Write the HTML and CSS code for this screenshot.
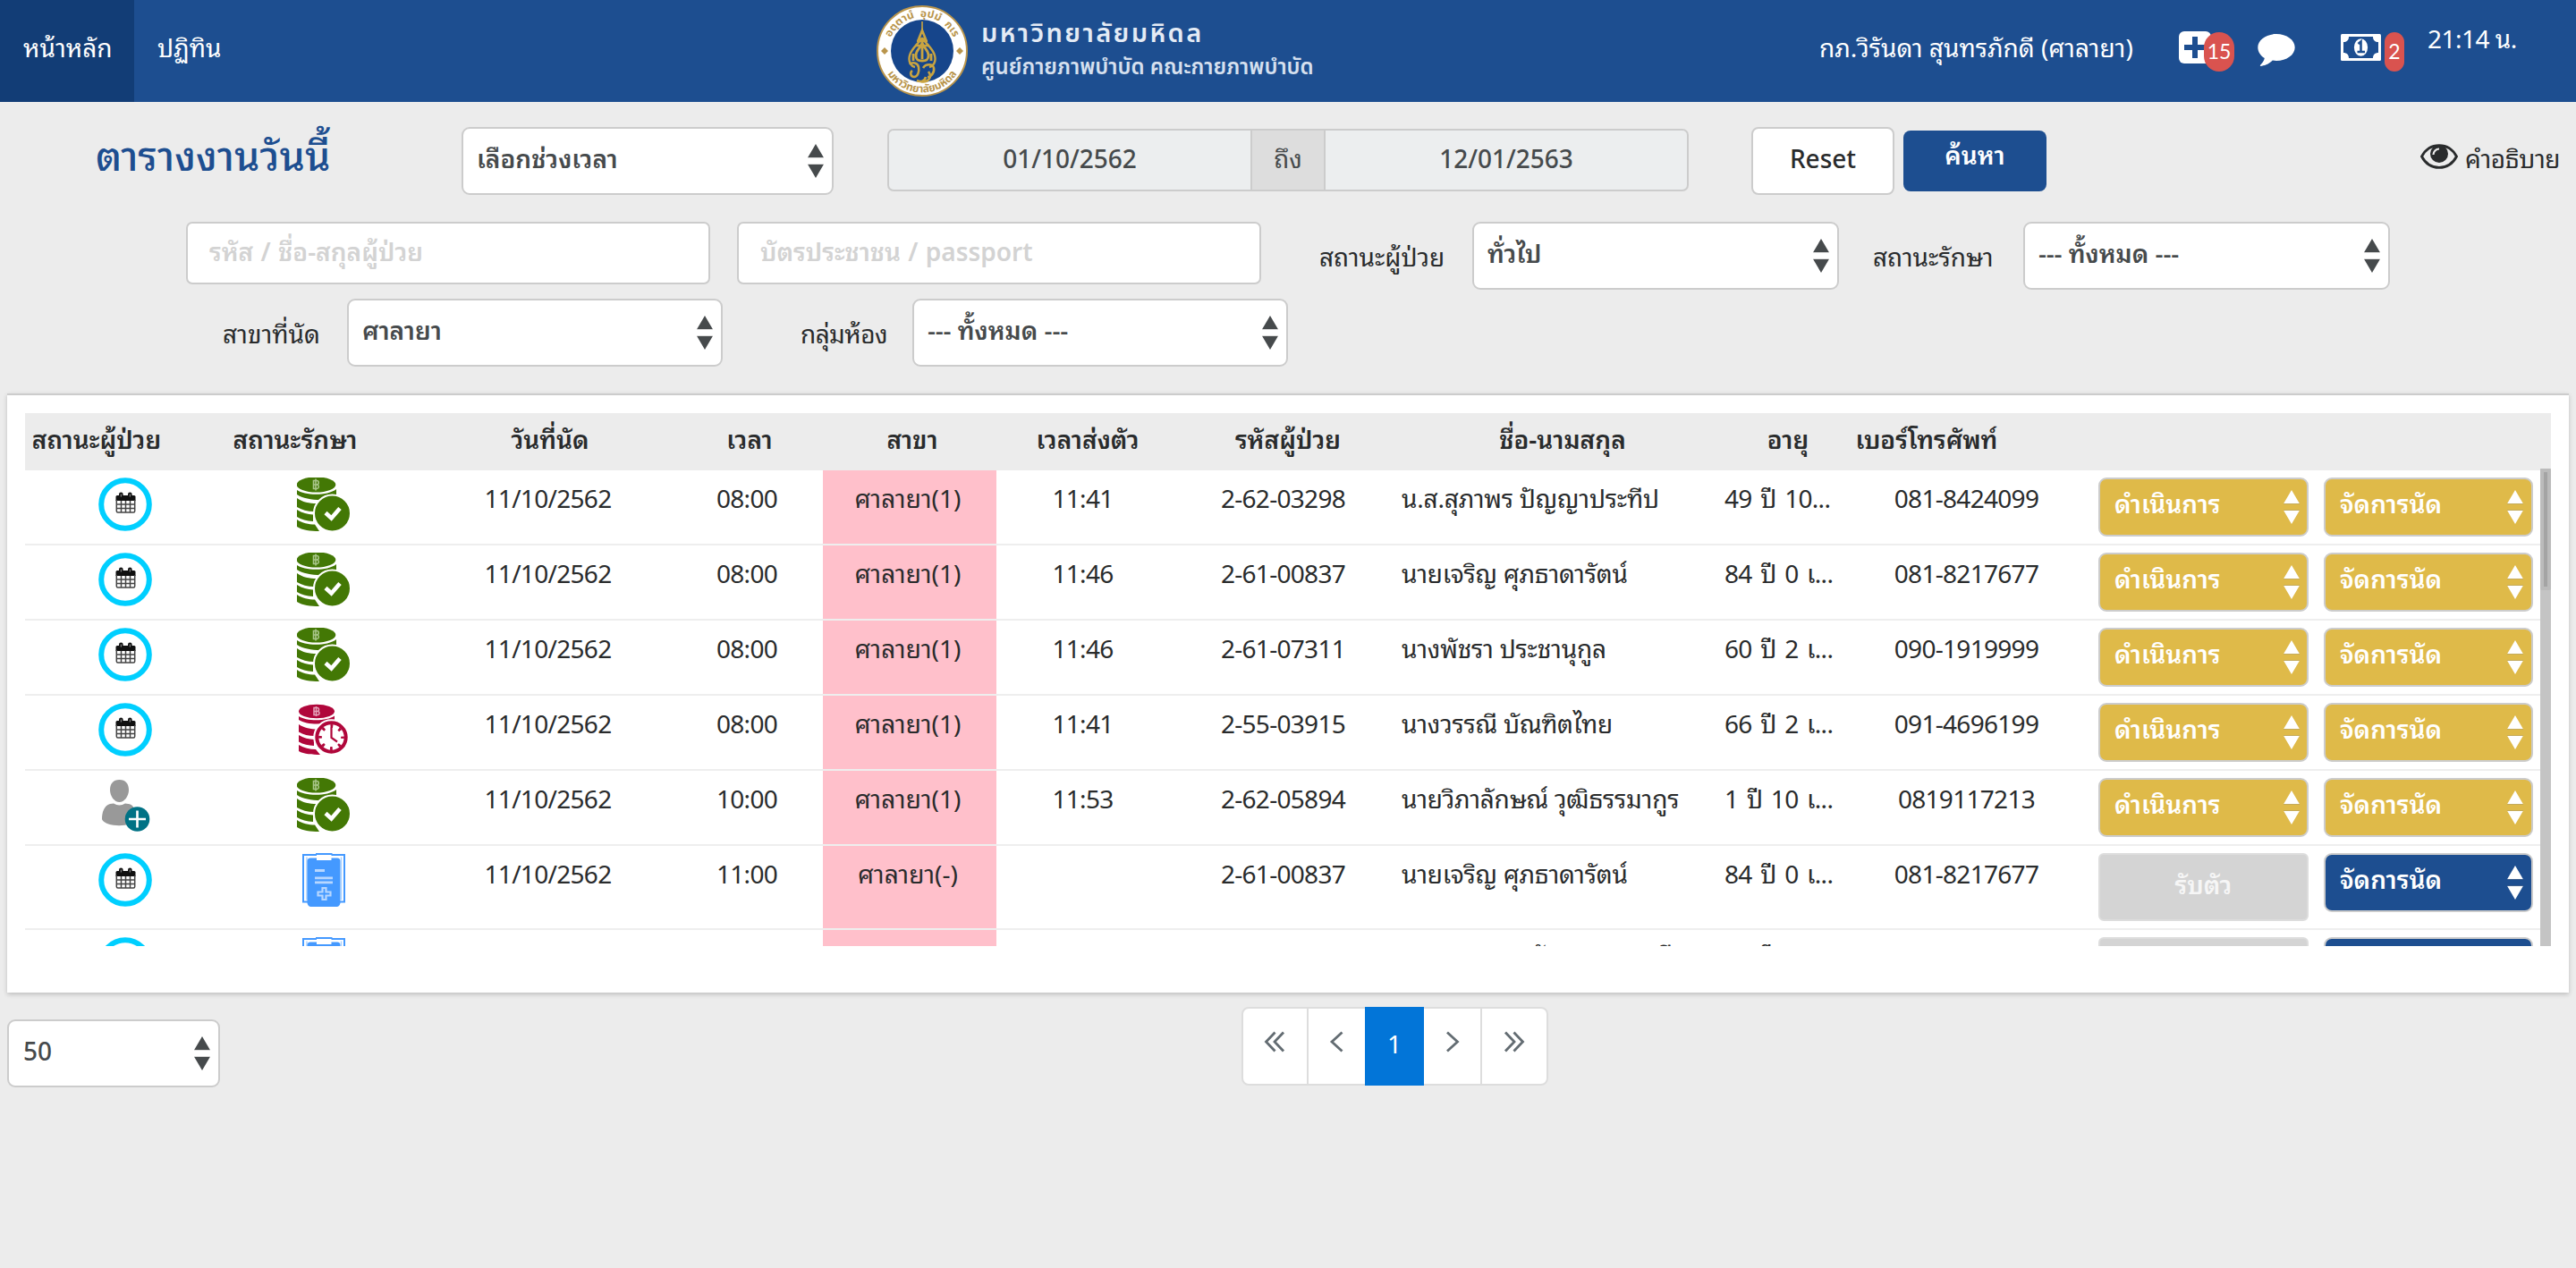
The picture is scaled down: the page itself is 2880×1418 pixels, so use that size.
FILE: index.html
```html
<!DOCTYPE html>
<html lang="th">
<head>
<meta charset="utf-8">
<title>ตารางงานวันนี้</title>
<link rel="stylesheet" href="styles.css">
</head>
<body>
<svg class="defs" width="0" height="0">
  <symbol id="i-cal" viewBox="0 0 60 60">
    <circle cx="30" cy="30" r="26.8" fill="#fff" stroke="#00cfff" stroke-width="6"/>
    <path d="M21 20h19a1.5 1.5 0 0 1 1.500 1.500V26h-22v-4.500a1.500 1.500 0 0 1 1.500-1.500z" fill="#111"/>
    <rect x="23" y="16.500" width="4.600" height="7" rx="2.300" fill="#111"/><rect x="33" y="16.500" width="4.600" height="7" rx="2.300" fill="#111"/>
    <path d="M25.300 18.500v3M35.300 18.500v3" stroke="#999" stroke-width="1"/>
    <path d="M20.300 25v12.500q0 1.500 1.500 1.500h17.400q1.500 0 1.500-1.500V25M20 30h21M20 34.500h21M25.500 26v13M30.500 26v13M35.500 26v13" fill="none" stroke="#444" stroke-width="1.500"/>
  </symbol>
  <symbol id="i-paid" viewBox="0 0 60 60">
    <g fill="#437805">
      <ellipse cx="21.500" cy="8" rx="21.800" ry="8.600"/>
      <path d="M0 14c8 6 34 7 44-1v9c-10 5-34 4-44-3zM0 23c6 4.500 14 6 22 6l-3 9c-7 0-14-2-19-5zM0 36c6 4 12 5 18 5.500v7.500c-7-.5-13-2-18-5zM0 47c6 4 13 5.500 20 5.500l5 7.500c-10 0-19-1-25-5z"/>
      <circle cx="39.500" cy="40" r="20.500" stroke="#fff" stroke-width="2"/>
    </g>
    <path d="M18.500 3.500v9h4a2.300 2.300 0 0 0 0-4.500h-4 3.500a2.200 2.200 0 0 0 0-4.500zM21 1.500v13" fill="none" stroke="#a9c68a" stroke-width="1.600"/>
    <path d="M32 39.500l6.500 6L48 34.500" fill="none" stroke="#fff" stroke-width="4.600"/>
  </symbol>
  <symbol id="i-wait" viewBox="0 0 60 60">
    <g fill="#b0073b">
      <ellipse cx="22" cy="9.500" rx="20" ry="7.800"/>
      <path d="M2 15c8 5.500 31 6 40-.5v5c-12 6-31 5-40-.5zM2 24c6 4 13 5.500 21 5.500l-3 7.500c-7 0-13-1.500-18-4.500zM2 36c6 3.500 11 4.500 17 5v7c-6-.5-12-1.500-17-4.500zM2 47c6 3.500 12 5 19 5l5 6c-9 0-18-.5-24-4z"/>
      <circle cx="38.500" cy="38.500" r="19.200" stroke="#fff" stroke-width="2"/>
    </g>
    <circle cx="38.500" cy="38.500" r="14.200" fill="#fff"/>
    <circle cx="38.500" cy="38.500" r="12.500" fill="none" stroke="#b0073b" stroke-width="3.800" stroke-dasharray="2.800 7.017" stroke-dashoffset="1.400"/>
    <path d="M38.500 27.500v11.500l6.500 4.500" fill="none" stroke="#b0073b" stroke-width="2.200"/>
    <path d="M19 5.500v8h4a2 2 0 0 0 0-4h-4 3.500a2 2 0 0 0 0-4zM21.500 4v11" fill="none" stroke="#e3a3b8" stroke-width="1.500"/>
  </symbol>
  <symbol id="i-user" viewBox="0 0 60 60">
    <path d="M23.500 2c7 0 10.500 4.500 10.500 11.500S29 27 23.500 27 13 20.500 13 13.500 16.500 2 23.500 2zM13 29l4-.6q6.500 4 13 0l5 .8c6 2 8 12 8.500 17-6 9.300-35 9.300-39.500 0C4 39 6 31 13 29z" fill="#999"/>
    <circle cx="43.500" cy="46" r="13.800" fill="#007285"/>
    <path d="M43.500 36.500v19M34 46h19" stroke="#fff" stroke-width="2.600"/>
  </symbol>
  <symbol id="i-clip" viewBox="0 0 60 60">
    <rect x="7" y="2" width="46" height="52.500" fill="#fff" stroke="#4499ff" stroke-width="2"/>
    <path d="M11 4.500v48M49.500 4.500v48" stroke="#a8d0ff" stroke-width="1.400"/>
    <path d="M15 5.500h30a3.500 3.500 0 0 1 3.500 3.500v47q-1 4-4 4h-29q-3 0-4-4V9A3.500 3.500 0 0 1 15 5.500z" fill="#4499ff"/>
    <rect x="22" y="0" width="16.500" height="8" fill="#fff"/><path d="M21 1h18.500" stroke="#4499ff" stroke-width="2"/>
    <path d="M20 19.500h11M20 27.800h20M20 32.800h20" stroke="#b7d7ff" stroke-width="2.800"/>
    <path d="M28.500 39h4v4.500h5v4h-5V52h-4v-4.500h-5v-4h5z" fill="none" stroke="#b7d7ff" stroke-width="2.200"/>
  </symbol>
  <symbol id="i-arrows" viewBox="0 0 18 38">
    <path d="M9 0l8.800 15H.2zM.2 23h17.600L9 38z" fill="currentColor"/>
    <path d="M0 15.500h18M0 22.500h18" stroke="#888" stroke-opacity=".3" stroke-width="1"/>
  </symbol>
</svg>

<header class="topbar">
  <nav class="nav">
    <a class="tab active">หน้าหลัก</a>
    <a class="tab">ปฏิทิน</a>
  </nav>
  <div class="brand">
    <svg class="seal" viewBox="0 0 102 102">
      <circle cx="51" cy="51" r="50" fill="#fff" stroke="#b9954c" stroke-width="2"/>
      <circle cx="51" cy="51" r="35" fill="#16458b"/>
      <path id="arc-top" d="M13 51a38 38 0 0 1 76 0" fill="none"/>
      <path id="arc-low" d="M4.500 51a46.500 46.500 0 0 0 93 0" fill="none"/>
      <text class="seal-text"><textPath href="#arc-top" startOffset="50%" text-anchor="middle">อตฺตานํ &#160;อุปมํ&#160; กเร</textPath></text>
      <text class="seal-text"><textPath href="#arc-low" startOffset="50%" text-anchor="middle">มหาวิทยาลัยมหิดล</textPath></text>
      <path d="M5 51l4-4 4 4-4 4zM89 51l4-4 4 4-4 4z" fill="#b9954c"/>
      <g fill="none" stroke="#c9a441">
        <path d="M51 18v14" stroke-width="1.600"/>
        <path d="M51 28l-4 10h8zM45 40h12M43 45h16" stroke-width="2.600"/>
        <path d="M51 36c-3 6-12 12-14 20s2 12 6 13M51 36c3 6 12 12 14 20s-2 12-6 13" stroke-width="2.400"/>
        <path d="M51 42c-2 6-7 8-7 14s4 6 7 6 7 0 7-6-5-8-7-14zM51 46v14M41 54v8M61 54v8" stroke-width="2.800"/>
        <path d="M37 66c3-3 9-2 10 3s-1 11-5 11-5-5-2-7M52 70c3-5 11-5 12 0s-3 10-7 10M49 85c8 2 14-4 9-11M45 84c4 2 9 1 10-4" stroke-width="2.600"/>
      </g>
    </svg>
    <div class="brand-text">
      <div class="brand-name">มหาวิทยาลัยมหิดล</div>
      <div class="brand-sub">ศูนย์กายภาพบำบัด คณะกายภาพบำบัด</div>
    </div>
  </div>
  <div class="userbar">
    <span class="username">กภ.วิรันดา สุนทรภักดี (ศาลายา)</span>
    <span class="notice plus">
      <svg width="36" height="36" viewBox="0 0 36 36"><rect width="36" height="36" rx="6" fill="#fff"/><path d="M18 6v24M6 18h24" stroke="#1d4e90" stroke-width="6"/></svg>
      <b class="badge b15">15</b>
    </span>
    <svg class="comment" width="42" height="36" viewBox="0 0 42 36"><path d="M21 0c11.500 0 20.700 6.700 20.700 15S32.500 30 21 30q-2.200 0-4.200-.4C12.500 34 7 35.700 3.500 35.900c-.6 0-.9-.7-.4-1.200 2-2 4.200-4.500 4.700-7.700C3.200 24.300.3 19.900.3 15 .3 6.700 9.500 0 21 0z" fill="#fff"/></svg>
    <svg class="money" width="45" height="30" viewBox="0 0 45 30"><rect width="45" height="30" rx="1.500" fill="#fff"/><path d="M9 3h27c0 4 2.500 6 6 6v12c-3.500 0-6 2-6 6H9c0-4-2.500-6-6-6V9c3.500 0 6-2 6-6z" fill="#1d4e90"/><ellipse cx="22.500" cy="15" rx="7.600" ry="9.800" fill="#fff"/><path d="M19.500 11l3-2.500V19M18.500 20h8.500" stroke="#1d4e90" stroke-width="2.600" fill="none"/></svg>
    <b class="badge b2">2</b>
    <span class="clock">21:14 น.</span>
  </div>
</header>

<section class="filters">
  <div class="frow r1">
    <h1 class="title">ตารางงานวันนี้</h1>
    <div class="select w-range">เลือกช่วงเวลา<svg class="arrows"><use href="#i-arrows"/></svg></div>
    <div class="dates"><span class="date">01/10/2562</span><span class="addon">ถึง</span><span class="date">12/01/2563</span></div>
    <button class="btn reset">Reset</button>
    <button class="btn search">ค้นหา</button>
    <div class="legend">
      <svg width="42" height="28" viewBox="0 0 42 28"><path d="M1.500 14C5.500 6.500 12.500 1.600 21 1.600S36.500 6.500 40.500 14C36.500 21.500 29.500 26.400 21 26.400S5.500 21.500 1.500 14z" fill="none" stroke="#292b2c" stroke-width="2.800"/><circle cx="21" cy="11" r="10" fill="#292b2c"/><path d="M14.500 12a6.500 6.500 0 0 1 6.500-6.500" fill="none" stroke="#ececec" stroke-width="2.200"/></svg>
      <span>คำอธิบาย</span>
    </div>
  </div>
  <div class="frow r2">
    <div class="input in1">รหัส / ชื่อ-สกุลผู้ป่วย</div>
    <div class="input in2">บัตรประชาชน / passport</div>
    <label class="lb l1">สถานะผู้ป่วย</label>
    <div class="select w-state">ทั่วไป<svg class="arrows"><use href="#i-arrows"/></svg></div>
    <label class="lb l2">สถานะรักษา</label>
    <div class="select w-state"><span><i class="dash">---</i> ทั้งหมด <i class="dash">---</i></span><svg class="arrows"><use href="#i-arrows"/></svg></div>
  </div>
  <div class="frow r3">
    <label class="lb l3">สาขาที่นัด</label>
    <div class="select w-branch">ศาลายา<svg class="arrows"><use href="#i-arrows"/></svg></div>
    <label class="lb l4">กลุ่มห้อง</label>
    <div class="select w-branch"><span><i class="dash">---</i> ทั้งหมด <i class="dash">---</i></span><svg class="arrows"><use href="#i-arrows"/></svg></div>
  </div>
</section>

<main class="card">
  <div class="thead">
    <span>สถานะผู้ป่วย</span><span>สถานะรักษา</span><span>วันที่นัด</span><span>เวลา</span><span>สาขา</span><span>เวลาส่งตัว</span><span>รหัสผู้ป่วย</span><span>ชื่อ-นามสกุล</span><span>อายุ</span><span>เบอร์โทรศัพท์</span>
  </div>
  <div class="scroller">
    <div class="tbody">
      <div class="row"><span><svg class="ic"><use href="#i-cal"/></svg></span><span><svg class="ic"><use href="#i-paid"/></svg></span><span>11/10/2562</span><span class="tm">08:00</span><span class="branch">ศาลายา(1)</span><span>11:41</span><span>2-62-03298</span><span class="left th">น.ส.สุภาพร ปัญญาประทีป</span><span class="left age">49 ปี 10...</span><span class="tel">081-8424099</span><span class="acts"><b class="act">ดำเนินการ<svg class="arrows"><use href="#i-arrows"/></svg></b><b class="act">จัดการนัด<svg class="arrows"><use href="#i-arrows"/></svg></b></span></div>
      <div class="row"><span><svg class="ic"><use href="#i-cal"/></svg></span><span><svg class="ic"><use href="#i-paid"/></svg></span><span>11/10/2562</span><span class="tm">08:00</span><span class="branch">ศาลายา(1)</span><span>11:46</span><span>2-61-00837</span><span class="left th">นายเจริญ ศุภธาดารัตน์</span><span class="left age">84 ปี 0 เ...</span><span class="tel">081-8217677</span><span class="acts"><b class="act">ดำเนินการ<svg class="arrows"><use href="#i-arrows"/></svg></b><b class="act">จัดการนัด<svg class="arrows"><use href="#i-arrows"/></svg></b></span></div>
      <div class="row"><span><svg class="ic"><use href="#i-cal"/></svg></span><span><svg class="ic"><use href="#i-paid"/></svg></span><span>11/10/2562</span><span class="tm">08:00</span><span class="branch">ศาลายา(1)</span><span>11:46</span><span>2-61-07311</span><span class="left th">นางพัชรา ประชานุกูล</span><span class="left age">60 ปี 2 เ...</span><span class="tel">090-1919999</span><span class="acts"><b class="act">ดำเนินการ<svg class="arrows"><use href="#i-arrows"/></svg></b><b class="act">จัดการนัด<svg class="arrows"><use href="#i-arrows"/></svg></b></span></div>
      <div class="row"><span><svg class="ic"><use href="#i-cal"/></svg></span><span><svg class="ic"><use href="#i-wait"/></svg></span><span>11/10/2562</span><span class="tm">08:00</span><span class="branch">ศาลายา(1)</span><span>11:41</span><span>2-55-03915</span><span class="left th">นางวรรณี บัณฑิตไทย</span><span class="left age">66 ปี 2 เ...</span><span class="tel">091-4696199</span><span class="acts"><b class="act">ดำเนินการ<svg class="arrows"><use href="#i-arrows"/></svg></b><b class="act">จัดการนัด<svg class="arrows"><use href="#i-arrows"/></svg></b></span></div>
      <div class="row"><span><svg class="ic"><use href="#i-user"/></svg></span><span><svg class="ic"><use href="#i-paid"/></svg></span><span>11/10/2562</span><span class="tm">10:00</span><span class="branch">ศาลายา(1)</span><span>11:53</span><span>2-62-05894</span><span class="left th">นายวิภาลักษณ์ วุฒิธรรมากูร</span><span class="left age">1 ปี 10 เ...</span><span class="tel">0819117213</span><span class="acts"><b class="act">ดำเนินการ<svg class="arrows"><use href="#i-arrows"/></svg></b><b class="act">จัดการนัด<svg class="arrows"><use href="#i-arrows"/></svg></b></span></div>
      <div class="row tall"><span><svg class="ic"><use href="#i-cal"/></svg></span><span><svg class="ic"><use href="#i-clip"/></svg></span><span>11/10/2562</span><span class="tm">11:00</span><span class="branch">ศาลายา(-)</span><span></span><span>2-61-00837</span><span class="left th">นายเจริญ ศุภธาดารัตน์</span><span class="left age">84 ปี 0 เ...</span><span class="tel">081-8217677</span><span class="acts"><b class="off">รับตัว</b><b class="act blue">จัดการนัด<svg class="arrows"><use href="#i-arrows"/></svg></b></span></div>
      <div class="row tall last"><span><svg class="ic"><use href="#i-cal"/></svg></span><span><svg class="ic"><use href="#i-clip"/></svg></span><span></span><span></span><span class="branch"></span><span></span><span></span><span class="left th">นางสาวมาลา วันดารามาลาสี</span><span class="left age">66 ปี 2 เ...</span><span></span><span class="acts"><b class="off"></b><b class="act blue"></b></span></div>
    </div>
    <div class="track"><div class="thumb"></div></div>
  </div>
</main>

<footer class="foot">
  <div class="select w-size">50<svg class="arrows"><use href="#i-arrows"/></svg></div>
  <div class="pager">
    <span class="pg p-first"><svg width="24" height="24" viewBox="0 0 24 24"><path d="M12.500 1.500L2.500 12l10 10.500M22 1.500L12 12l10 10.500"/></svg></span>
    <span class="pg p-prev"><svg width="24" height="24" viewBox="0 0 24 24"><path d="M18.500 1.500L7 12l11.500 10.500"/></svg></span>
    <span class="pg p-cur">1</span>
    <span class="pg p-next"><svg width="24" height="24" viewBox="0 0 24 24"><path d="M6 1.500L17.500 12 6 22.500"/></svg></span>
    <span class="pg p-last"><svg width="24" height="24" viewBox="0 0 24 24"><path d="M2 1.500L12 12 2 22.500M11.500 1.500L21.500 12l-10 10.500"/></svg></span>
  </div>
</footer>
</body>
</html>
```
FILE: styles.css
```css
* { box-sizing: border-box; }
body {
  margin: 0;
  width: 2880px;
  height: 1418px;
  overflow: hidden;
  background: #ececec;
  color: #292b2c;
  font: 400 28px/40px "Noto Sans", "Noto Sans Thai Looped", sans-serif;
}
.defs { position: absolute; }

.topbar { display: flex; height: 114px; background: #1d4e90; color: #fff; }
.nav { display: flex; width: 980px; white-space: nowrap; }
.tab { height: 114px; padding: 33px 26px 0; }
.tab.active { width: 150px; padding-right: 0; background: #123d76; }
.brand { display: flex; width: 1054px; }
.seal { width: 102px; height: 102px; margin-top: 6px; }
.seal-text { font: 700 12px "Noto Sans Thai", "Noto Sans", sans-serif; fill: #b9954c; }
.brand-text { margin-left: 15px; padding-top: 18px; white-space: nowrap; font-family: "Noto Sans Thai", "Noto Sans", sans-serif; }
.brand-name { font-size: 29px; font-weight: 600; line-height: 40px; letter-spacing: 2.4px; color: #e4ebf5; }
.brand-sub { font-size: 24px; font-weight: 600; line-height: 36px; color: #d6e0ef; }
.userbar { display: flex; align-items: flex-start; }
.username { width: 402px; margin-top: 33px; white-space: nowrap; }
.notice { display: flex; margin-top: 35px; }
.badge { height: 44px; background: #d9534f; color: #fff; font: 400 23px/42px Lato, sans-serif; text-align: center; }
.b15 { width: 34px; margin: 1px 0 0 -8px; border-radius: 17px; }
.b2 { width: 22px; margin: 36px 0 0 4px; border-radius: 11px; }
.comment { margin: 38px 0 0 26px; }
.money { margin: 38px 0 0 51px; }
.clock { margin: 23px 0 0 26px; white-space: nowrap; letter-spacing: -.5px; }

.filters { height: 326px; }
.frow { display: flex; align-items: flex-start; white-space: nowrap; }
.r1 { height: 134px; padding-top: 28px; }
.r2 { height: 86px; }
.r3 { height: 76px; }
.title { width: 409px; margin: 0 0 0 107px; font-size: 45px; font-weight: 500; line-height: 64px; color: #1d4e90; }
.select {
  display: flex; justify-content: space-between;
  height: 76px; padding: 13px 9px 0 16px;
  border: 2px solid #ccc; border-radius: 9px;
  background: #fff; color: #464a4c; font-weight: 600;
}
.arrows { width: 18px; height: 38px; margin-top: 4px; flex: none; }
.dash { font-style: normal; font-weight: 500; letter-spacing: -.2px; }
.w-range { width: 416px; }
.w-range, .w-state, .w-branch { padding-left: 15px; }
.dates { display: flex; width: 896px; height: 70px; margin: 2px 0 0 60px; border: 2px solid #ccc; border-radius: 7px; background: #eceeef; color: #464a4c; overflow: hidden; }
.date { flex: 1; padding-top: 11px; text-align: center; font-weight: 500; }
.addon { width: 84px; padding-top: 11px; text-align: center; background: #ddd; border: solid #ccc; border-width: 0 2px; }
.btn { border: 0; font: inherit; font-weight: 500; text-align: center; border-radius: 8px; }
.reset { width: 160px; height: 76px; margin-left: 70px; padding: 0 0 6px; background: #fff; border: 2px solid #ccc; color: #292b2c; }
.search { width: 160px; height: 68px; margin: 4px 0 0 10px; padding: 0 0 14px; background: #1d4e90; color: #fff; font-weight: 600; }
.legend { display: flex; margin: 15px 0 0 418px; gap: 8px; }
.legend svg { margin-top: 4px; }
.legend span { letter-spacing: -.4px; }
.input { width: 586px; height: 70px; padding: 11px 24px 0; border: 2px solid #ccc; border-radius: 7px; background: #fff; color: #d3d3d3; font-weight: 600; word-spacing: 1px; }
.in1 { margin-left: 208px; }
.in2 { margin-left: 30px; }
.lb { padding-top: 19px; }
.l1 { width: 171px; margin-left: 65px; }
.l2 { width: 168px; margin-left: 39px; }
.l3 { width: 139px; margin-left: 249px; }
.l4 { width: 125px; margin-left: 87px; letter-spacing: -.6px; }
.w-state { width: 410px; margin-right: -1px; }
.w-branch { width: 420px; }

.card { width: 2864px; height: 670px; margin: 0 8px; padding: 20px 20px 0; background: #fff; border-top: 2px solid #ccc; box-shadow: 0 2px 5px rgba(0,0,0,.2); }
.thead {
  display: grid; height: 64px; padding-top: 9px; background: #ececec;
  grid-template-columns: 160px 284px 286px 160px 204px 188px 260px 354px 150px 160px;
  text-align: center; font-weight: 600; white-space: nowrap;
}
.scroller { display: flex; height: 534px; margin-top: -2px; overflow: hidden; }
.tbody { width: 2812px; padding-top: 2px; }
.row {
  display: grid; height: 84px; border-bottom: 2px solid #eee;
  grid-template-columns: 224px 220px 282px 166px 194px 194px 254px 361px 167px 218px 1fr;
  text-align: center; white-space: nowrap;
}
.row > span { padding-top: 11px; padding-right: 1px; letter-spacing: -.7px; }
.row > .tm, .row > .branch { padding-right: 4px; }
.row > .branch { background: #ffc0cb; letter-spacing: 0; }
.row.tall { height: 94px; }
.row > .left { padding-left: 5px; text-align: left; }
.row > .th { letter-spacing: -.2px; }
.row > .age { word-spacing: 3px; }
.row.last > .left { padding-top: 8px; }
.ic { display: block; width: 60px; height: 60px; margin: -3px auto 0; }
.row > .acts { display: flex; align-items: flex-start; gap: 17px; padding: 8px 0 0 38px; letter-spacing: 0; }
.act {
  display: flex; justify-content: space-between; width: 235px; height: 66px; padding: 7px 8px 0 16px;
  border: 2px solid #ccc; border-radius: 9px; background: #dfba49; color: #fff; font-weight: 600;
}
.act .arrows { margin-top: 5px; }
.act + .act, .act.blue { width: 234px; padding-right: 9px; }
.act.blue { background: #1d4e90; }
.off { width: 235px; height: 76px; padding: 13px 0 0; border: 2px solid #ddd; border-radius: 6px; background: #d4d4d4; color: #f6f6f6; font-weight: 600; text-align: center; }
.track { width: 12px; height: 534px; background: #c4c4c4; }
.thumb { width: 12px; height: 136px; border: 4px solid #bbb; border-radius: 2px; background: #a4a4a4; }

.foot { display: flex; align-items: flex-start; height: 120px; padding: 16px 0 0 8px; }
.w-size { width: 238px; margin-top: 14px; font-weight: 500; }
.pager { display: flex; width: 343px; height: 88px; margin-left: 1142px; border: 2px solid #ddd; border-radius: 8px; background: #fff; }
.pg { display: flex; align-items: flex-start; justify-content: center; padding-top: 25px; border-right: 2px solid #ddd; }
.pg path { fill: none; stroke: #636c72; stroke-width: 2.8; }
.p-first { width: 73px; }
.p-prev { width: 66px; }
.p-cur { width: 66px; height: 88px; margin: -2px 0 0 -2px; padding-top: 21px; border: 0; background: #0275d8; color: #fff; }
.p-next { width: 66px; }
.p-last { width: 72px; border: 0; }
```
